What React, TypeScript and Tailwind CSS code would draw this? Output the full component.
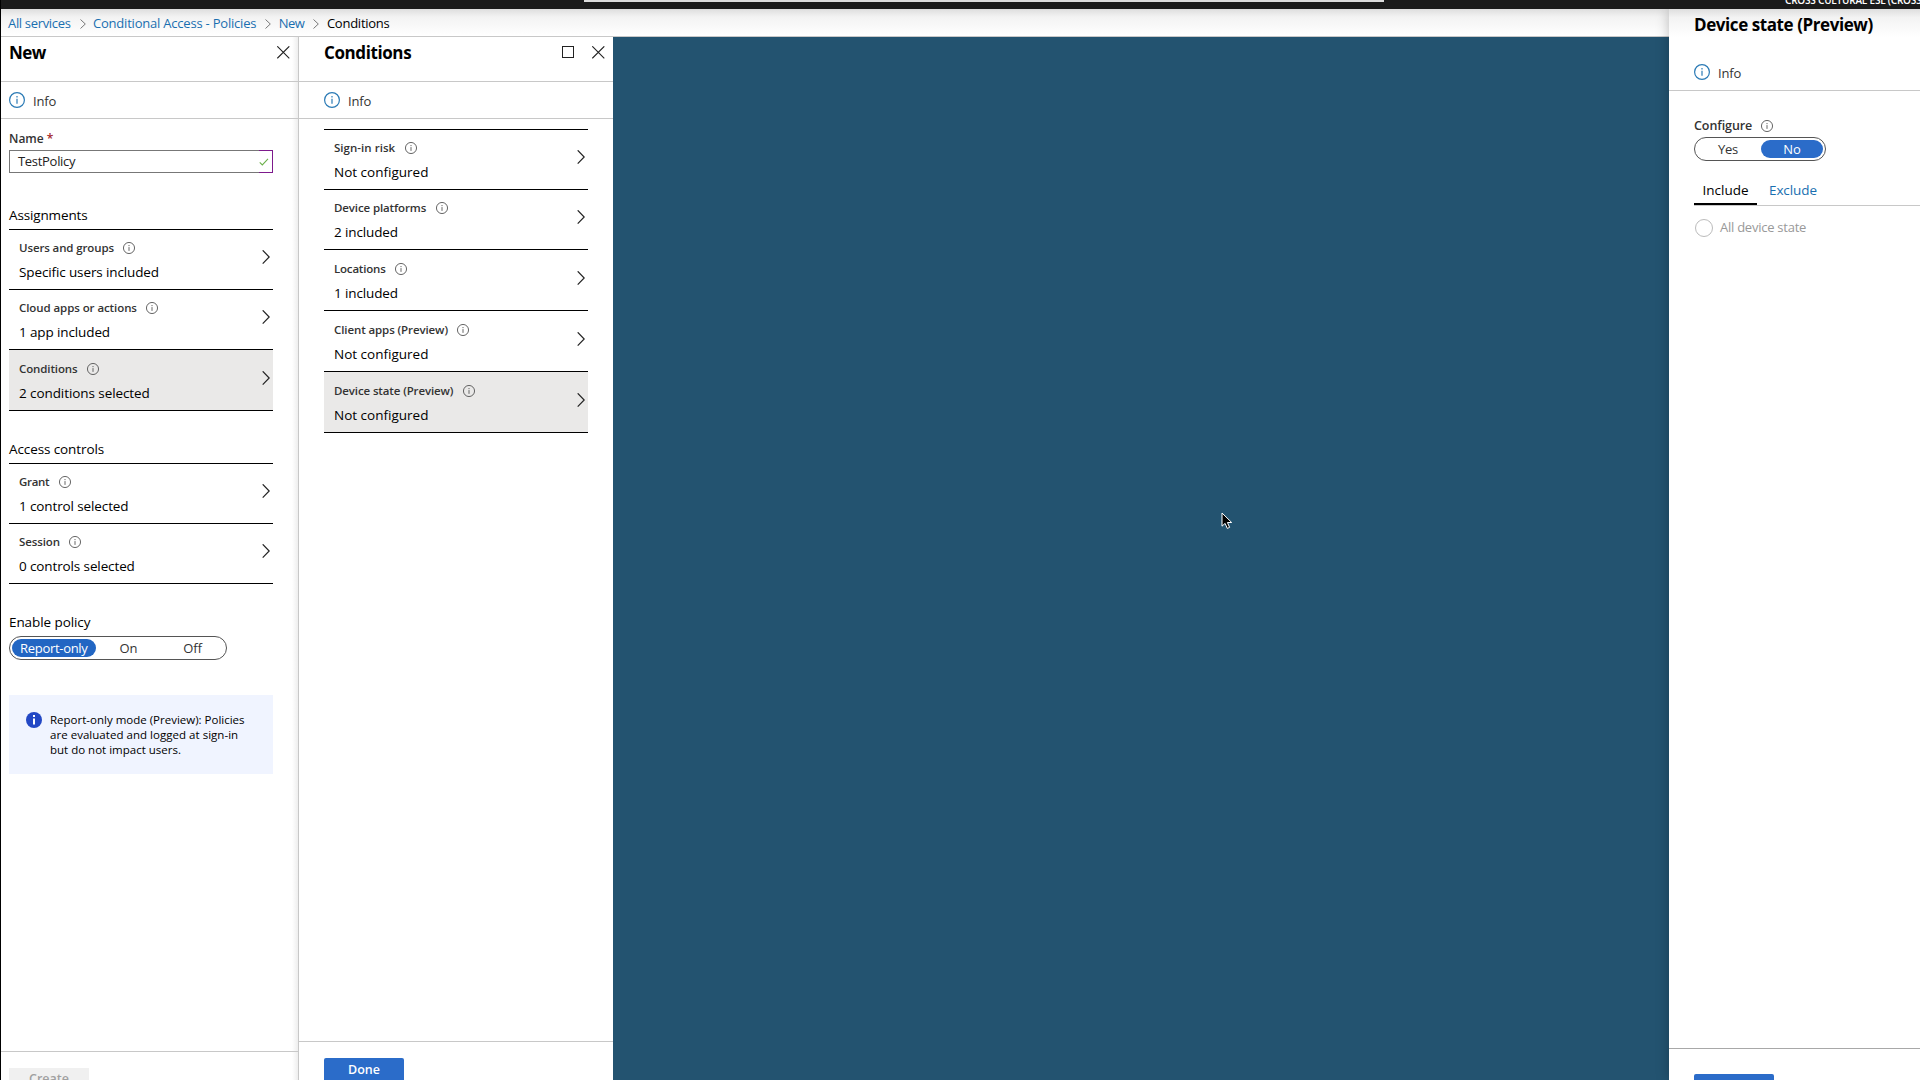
import React from "react";

function InfoIcon({ size = 12, className = "text-[#555]" }: { size?: number; className?: string }) {
  return (
    <svg width={size} height={size} viewBox="0 0 16 16" className={`shrink-0 ${className}`} fill="none" stroke="currentColor">
      <circle cx="8" cy="8" r="7.4" strokeWidth="1.2" />
      <path d="M8 6.8v5" strokeWidth="1.2" />
      <path d="M8 4v1.5" strokeWidth="1.2" />
    </svg>
  );
}

function Chevron() {
  return (
    <svg width="8" height="15" viewBox="0 0 8 15" className="shrink-0" fill="none" stroke="#222" strokeWidth="1.2">
      <path d="M0.7 0.3 7.2 7 0.7 13.7" />
    </svg>
  );
}

function Close() {
  return (
    <svg width="13" height="13" viewBox="0 0 13 13" fill="none" stroke="#222" strokeWidth="1.1">
      <path d="M0.3 0.3l12 12M12.3 0.3l-12 12" />
    </svg>
  );
}

type RowProps = {
  label: string;
  value: string;
  tall?: boolean;
  labelTrack?: string;
  valueTrack?: string;
  selected?: boolean;
};

function Row({
  label,
  value,
  tall,
  labelTrack = "tracking-[-0.12px]",
  valueTrack = "tracking-[-0.12px]",
  selected,
}: RowProps) {
  return (
    <div
      className={`flex justify-between border-b border-black pr-[3px] pl-[10px] ${tall ? "h-[61px] pt-px" : "h-[60px]"} ${selected ? "bg-[#eae9e8]" : ""}`}
    >
      <div>
        <div className="mt-[10px] flex h-4 items-center gap-[9.5px]">
          <span className={`text-[11.5px] leading-4 font-semibold text-[#333] ${labelTrack}`}>{label}</span>
          <InfoIcon />
        </div>
        <div className={`mt-[6px] text-[13.5px] leading-5 text-black ${valueTrack}`}>{value}</div>
      </div>
      <div className="mt-5">
        <Chevron />
      </div>
    </div>
  );
}

function InfoBar({ className }: { className: string }) {
  return (
    <div className={`flex items-center gap-2 border-b border-[#c8c8c8] text-[13px] text-[#333] ${className}`}>
      <InfoIcon size={16} className="text-[#2a7ab5]" />
      <span className="pt-[3px] tracking-[-0.2px]">Info</span>
    </div>
  );
}

function Crumb({ children, track }: { children: string; track: string }) {
  return (
    <>
      <span className={`text-[#1a6fb0] ${track}`}>{children}</span>
      <svg width="6" height="10" viewBox="0 0 6 10" fill="none" stroke="#777" className="mr-[7.5px] ml-[9px]">
        <path d="M0.5 0.5 5.3 5 0.5 9.5" />
      </svg>
    </>
  );
}

function NewPanel() {
  return (
    <section className="flex w-[298px] shrink-0 flex-col border-r border-[#c8c8c8] bg-linear-to-r from-white from-98% to-[#eeeeee]">
      <header className="flex h-[45px] justify-between border-b border-[#c8c8c8] pr-2 pl-2">
        <h1 className="mt-[3px] text-[17px] leading-[26px] font-bold tracking-[-0.5px]">New</h1>
        <div className="mt-[9px]"><Close /></div>
      </header>
      <InfoBar className="h-[37px] pl-2" />
      <div className="w-[272px] pl-2">
        <div className="mt-[12px] text-[12px] leading-4 font-semibold text-[#333]">
          Name <span className="text-[#a4262c]">*</span>
        </div>
        <div className="mt-[3px] flex h-[23px] border border-r-0 border-[#777]">
          <span className="flex-1 pl-2 text-[13px] leading-[21px] tracking-[-0.3px] text-[#222]">TestPolicy</span>
          <span className="-my-px flex w-[14px] items-center border border-l-0 border-[#7d1a8c]">
            <svg width="10" height="8" viewBox="0 0 11 9" fill="none" stroke="#6bb04a" strokeWidth="1.2">
              <path d="M0.7 4.8 3.6 7.8 10 1" />
            </svg>
          </span>
        </div>
        <h2 className="mt-[32px] h-[25px] border-b border-black text-[13.5px] leading-5 tracking-[-0.14px]">Assignments</h2>
        <Row label="Users and groups" value="Specific users included" />
        <Row label="Cloud apps or actions" value="1 app included" labelTrack="tracking-[-0.08px]" />
        <Row label="Conditions" value="2 conditions selected" tall selected valueTrack="tracking-[-0.08px]" />
        <h2 className="mt-[28px] h-[25px] border-b border-black text-[13.5px] leading-5 tracking-[-0.1px]">Access controls</h2>
        <Row label="Grant" value="1 control selected" labelTrack="tracking-[-0.3px]" />
        <Row label="Session" value="0 controls selected" />
        <div className="mt-[28px] text-[13.5px] leading-5 tracking-[-0.08px]">Enable policy</div>
        <div className="mt-[4px] flex h-6 w-[218px] items-center rounded-full border border-[#555] p-[2px] text-[13px]">
          <span className="flex h-[18px] w-[84px] items-center justify-center rounded-full bg-[#2266c3] pt-px tracking-[-0.3px] text-white">Report-only</span>
          <span className="w-[66px] pt-px text-center text-[#333]">On</span>
          <span className="w-[63px] pt-px text-center text-[#333]">Off</span>
        </div>
        <div className="mt-[35px] flex h-[79px] gap-2 bg-[#f0f4ff] pt-[17px] pl-[17px] text-[11.5px] leading-[15px]">
          <svg width="16" height="16" viewBox="0 0 16 16" className="shrink-0">
            <circle cx="8" cy="8" r="8" fill="#2348c5" />
            <path d="M8 6.5v6M8 3v2" stroke="#fff" strokeWidth="2" />
          </svg>
          <p className="whitespace-nowrap">
            Report-only mode (Preview): Policies<br />
            <span className="tracking-[0.03px]">are evaluated and logged at sign-in</span><br />
            but do not impact users.
          </p>
        </div>
      </div>
      <footer className="mt-auto h-[29px] border-t border-[#c8c8c8] pt-4 pl-2">
        <div className="h-6 w-20 bg-[#f0f0f0] text-center text-[12.5px] leading-[22px] font-semibold text-[#a0a0a0]">Create</div>
      </footer>
    </section>
  );
}

function ConditionsPanel() {
  return (
    <section className="flex w-[314px] shrink-0 flex-col bg-white">
      <header className="flex h-[45px] border-b border-[#c8c8c8] pr-2 pl-[25px]">
        <h1 className="mt-[3px] flex-1 text-[17px] leading-[26px] font-bold tracking-[-0.4px]">Conditions</h1>
        <div className="mt-[9px] flex gap-[18px]">
          <div className="h-3 w-3 border border-[#222]" />
          <Close />
        </div>
      </header>
      <InfoBar className="h-[37px] pl-[25px]" />
      <div className="mt-[10px] ml-[25px] w-[264px] border-t border-black">
        <Row label="Sign-in risk" value="Not configured" labelTrack="tracking-[0.03px]" valueTrack="tracking-normal" />
        <Row label="Device platforms" value="2 included" />
        <Row label="Locations" value="1 included" tall labelTrack="tracking-[-0.2px]" />
        <Row label="Client apps (Preview)" value="Not configured" tall labelTrack="tracking-[-0.1px]" valueTrack="tracking-normal" />
        <Row label="Device state (Preview)" value="Not configured" tall selected valueTrack="tracking-normal" />
      </div>
      <footer className="mt-auto h-[39px] border-t border-[#c8c8c8] pt-4 pl-[25px]">
        <div className="h-6 w-20 rounded-t-[2px] bg-[#2b6cc9] text-center text-[12.5px] leading-[23px] font-semibold text-white">Done</div>
      </footer>
    </section>
  );
}

function DevicePanel() {
  return (
    <aside className="relative flex w-[251px] shrink-0 flex-col bg-white shadow-[0_0_12px_rgba(0,0,0,0.25)]">
      <div className="h-7 bg-linear-to-b from-[#dedede] via-[#f3f3f3] via-30% to-white pl-[25px]">
        <h1 className="pt-[3px] text-[17px] leading-[26px] font-bold tracking-[-0.42px] whitespace-nowrap">Device state (Preview)</h1>
      </div>
      <InfoBar className="h-[54px] pt-[17px] pl-[25px]" />
      <div className="pl-[25px]">
        <div className="mt-[27px] flex h-4 items-center gap-[9px] text-[12.5px] font-semibold tracking-[-0.08px] text-[#333]">
          Configure <InfoIcon />
        </div>
        <div className="mt-[3px] flex h-6 w-[132px] items-center rounded-full border border-[#555] p-[2px] text-[13px]">
          <span className="w-[64px] pt-px pr-[2px] text-center tracking-[-0.2px] text-[#333]">Yes</span>
          <span className="flex h-[18px] w-[62px] items-center justify-center rounded-full bg-[#2b6cc9] pt-px font-medium text-white">No</span>
        </div>
        <div className="mt-[17px] flex h-7 border-b border-[#c8c8c8] text-[13.5px] leading-6">
          <span className="w-[63px] border-b-2 border-black text-center">Include</span>
          <span className="pl-3 tracking-[-0.1px] text-[#1a6fb0]">Exclude</span>
        </div>
        <div className="mt-[12px] flex items-center gap-[7px] text-[13px] tracking-[-0.25px] text-[#999]">
          <span className="ml-px h-[18px] w-[18px] rounded-full border border-[#bbb]" />
          All device state
        </div>
      </div>
      <footer className="mt-auto h-8 border-t border-[#a8a8a8] pt-[25px] pl-[25px]">
        <div className="h-6 w-20 rounded-t-[2px] bg-[#2b6cc9]" />
      </footer>
    </aside>
  );
}

export default function App() {
  return (
    <div className="flex h-[1080px] w-[1920px] flex-col overflow-hidden border-l border-black bg-white font-['Open_Sans',sans-serif] text-black">
      <header className="flex h-[9px] shrink-0 overflow-hidden bg-[#1b1b1b]">
        <div className="ml-[583px] h-[2px] w-[800px] shrink-0 bg-[#dcdcdc]" />
        <div className="-mt-[8px] ml-[401px] shrink-0 text-[10px] leading-4 font-semibold tracking-[-0.2px] whitespace-nowrap text-white">CROSS CULTURAL ESL (CROSS</div>
      </header>
      <div className="flex min-h-0 flex-1 overflow-hidden">
        <div className="flex w-[1668px] shrink-0 flex-col">
          <nav className="flex h-7 shrink-0 items-center border-b border-[#c8c8c8] bg-linear-to-b from-[#dedede] via-[#f3f3f3] via-30% to-white pt-[2px] pl-[7px] text-[13px]">
            <Crumb track="tracking-[-0.33px]">All services</Crumb>
            <Crumb track="tracking-[-0.21px]">Conditional Access - Policies</Crumb>
            <Crumb track="tracking-[-0.5px]">New</Crumb>
            <span className="tracking-[-0.25px]">Conditions</span>
          </nav>
          <main className="flex min-h-0 flex-1">
            <NewPanel />
            <ConditionsPanel />
            <div className="flex-1 bg-[#235370]">
              <svg width="12" height="18" viewBox="0 0 12 18" className="mt-[475px] ml-[608px]">
                <path d="M1 1v13.2l3.1-2.8 2.2 5 2.3-1-2.2-4.9h4.3z" fill="#000" stroke="#fff" strokeWidth="1" />
              </svg>
            </div>
          </main>
        </div>
        <DevicePanel />
      </div>
    </div>
  );
}
